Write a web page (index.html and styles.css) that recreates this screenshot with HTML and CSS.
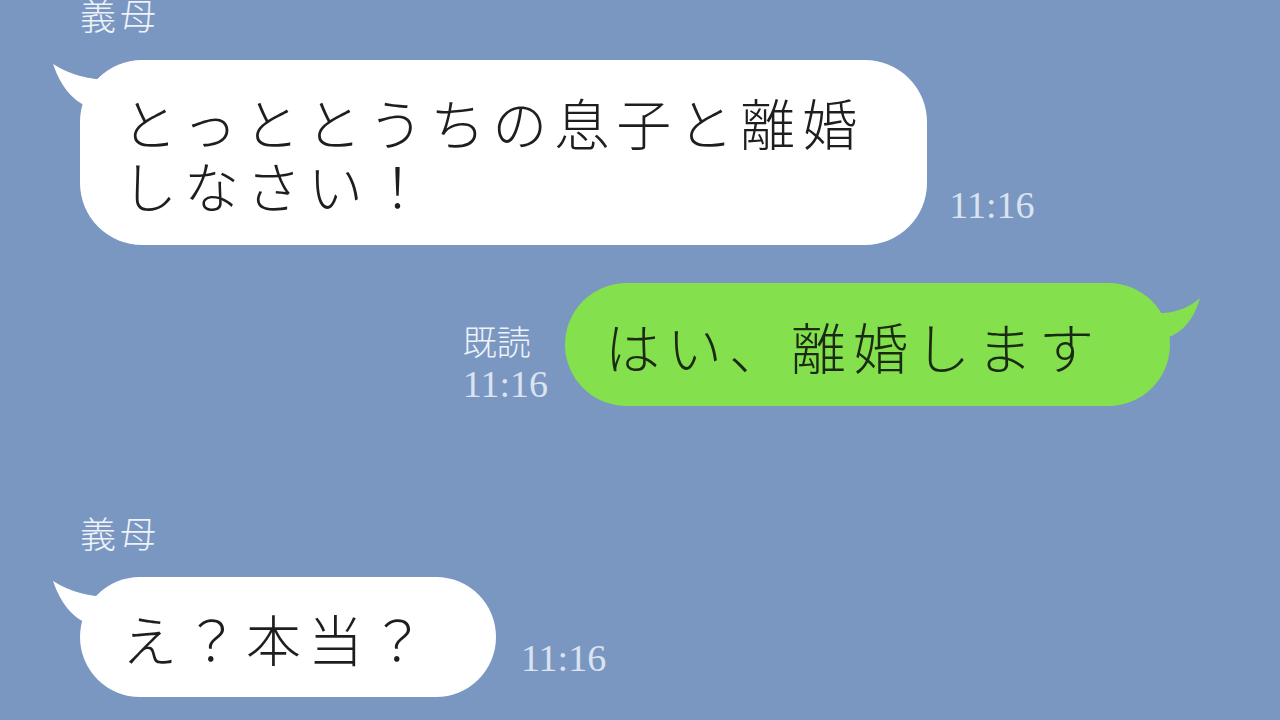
FILE: index.html
```html
<!DOCTYPE html>
<html lang="ja">
<head>
<meta charset="utf-8">
<link rel="stylesheet" href="styles.css">
</head>
<body>
<div class="chat">
  <div class="name name-first">義母</div>
  <div class="row row-1">
    <div class="bubble bubble-white bubble-big">
      <svg class="tail tail-left" width="62" height="60" viewBox="0 0 62 60"><path d="M1,2 Q26,18 60,18 L60,56 L34,56 L34,44 Q12,34 1,2 Z" fill="#ffffff"/></svg>
      とっととうちの息子と離婚<br>しなさい！
    </div>
    <div class="time time-1">11:16</div>
  </div>
  <div class="row row-mine">
    <div class="meta">
      <div class="read">既読</div>
      <div class="time">11:16</div>
    </div>
    <div class="bubble bubble-green">
      <svg class="tail tail-right" width="62" height="60" viewBox="0 0 62 60"><path d="M59,3 Q40,20 12,18 L12,58 L20,58 L25,43 Q50,35 59,3 Z" fill="#84e04c"/></svg>
      はい、離婚します
    </div>
  </div>
  <div class="name name-second">義母</div>
  <div class="row row-3">
    <div class="bubble bubble-white bubble-small">
      <svg class="tail tail-left" width="62" height="60" viewBox="0 0 62 60"><path d="M1,2 Q26,18 60,18 L60,56 L34,56 L34,44 Q12,34 1,2 Z" fill="#ffffff"/></svg>
      え？本当？
    </div>
    <div class="time time-3">11:16</div>
  </div>
</div>
</body>
</html>
```
FILE: styles.css
```css
html, body {
  margin: 0;
  padding: 0;
}
body {
  width: 1280px;
  height: 720px;
  overflow: hidden;
  background: #7a97c2;
  font-family: "Noto Sans CJK JP", "Noto Sans", sans-serif;
}
.chat {
  display: flex;
  flex-direction: column;
  padding-left: 80px;
}
.name {
  font-family: "Noto Sans CJK JP", sans-serif;
  font-weight: 300;
  font-size: 36px;
  line-height: 36px;
  letter-spacing: 4px;
  color: #eef2f9;
  height: 36px;
}
.name-first {
  margin-top: -4px;
}
.name-second {
  margin-top: 108px;
}
.row {
  display: flex;
  align-items: flex-end;
}
.row-1 {
  margin-top: 28px;
}
.row-3 {
  margin-top: 27px;
}
.row-mine {
  margin-top: 38px;
  justify-content: flex-end;
  padding-right: 110px;
}
.bubble {
  position: relative;
  font-weight: 300;
  font-size: 55px;
  letter-spacing: 7px;
  color: #1e1e1e;
  white-space: nowrap;
  border-radius: 62px;
}
.bubble-white {
  background: #ffffff;
}
.bubble-big {
  line-height: 63px;
  padding: 30px 63px 29px 42px;
}
.bubble-small {
  height: 120px;
  display: flex;
  align-items: center;
  padding: 0 64px 0 42px;
  box-sizing: border-box;
}
.bubble-green {
  background: #84e04c;
  height: 123px;
  display: flex;
  align-items: center;
  padding: 0 69px 0 40px;
  box-sizing: border-box;
  color: #1b2a12;
}
.tail {
  position: absolute;
  display: block;
}
.tail-left {
  left: -28px;
  top: 2px;
}
.tail-right {
  right: -33px;
  top: 12px;
}
.time {
  font-family: "Liberation Serif", serif;
  font-size: 38px;
  line-height: 38px;
  color: #dbe3f0;
}
.time-1 {
  margin-left: 22px;
  margin-bottom: 21px;
}
.time-3 {
  margin-left: 25px;
  margin-bottom: 20px;
}
.meta {
  display: flex;
  flex-direction: column;
  gap: 5px;
  margin-right: 17px;
  margin-bottom: 3px;
}
.read {
  font-family: "Noto Sans CJK JP", sans-serif;
  font-weight: 300;
  font-size: 34px;
  line-height: 38px;
  color: #eef2f9;
}
```
